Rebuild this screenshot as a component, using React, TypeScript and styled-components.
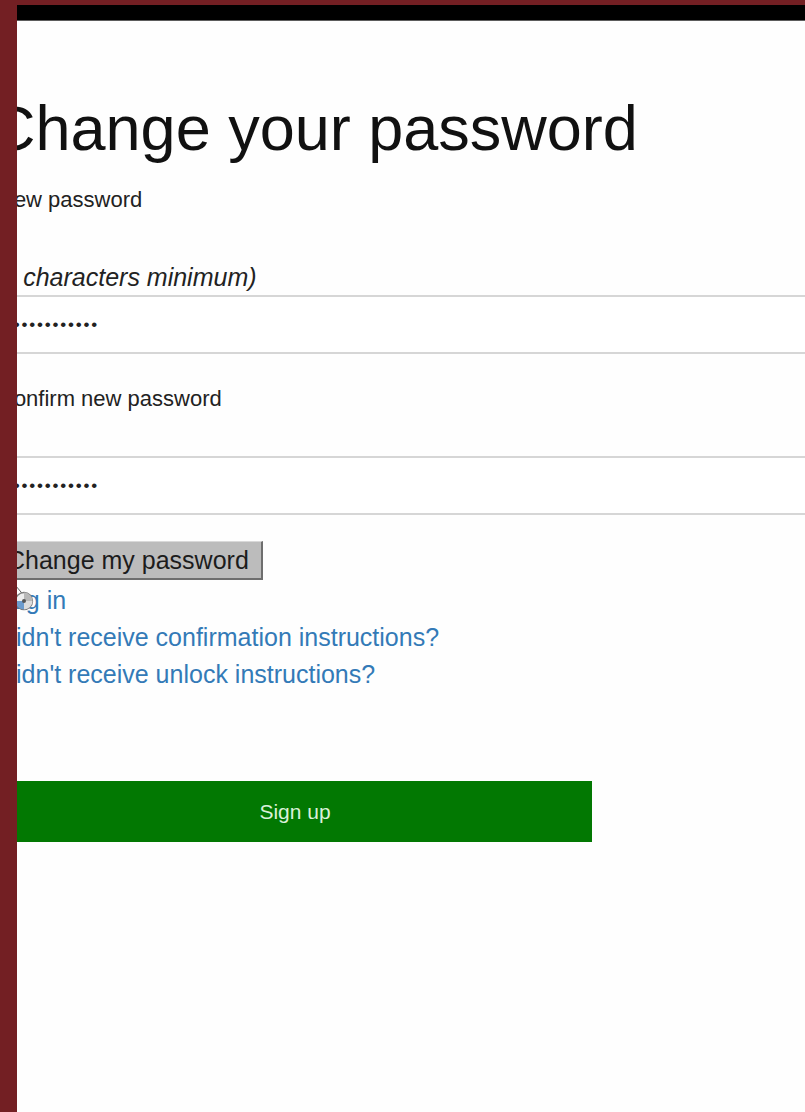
import * as React from 'react';
import styled, { createGlobalStyle } from 'styled-components';

const GlobalStyle = createGlobalStyle`
  html, body {
    margin: 0;
    padding: 0;
    background: #731f23;
  }

  body {
    font-family: 'Liberation Sans', Helvetica, Arial, sans-serif;
    font-size: 25px;
    color: #1a1a1a;
  }
`;

const Frame = styled.div`
  box-sizing: border-box;
  min-height: 100vh;
  padding: 5px 0 0 17px;
  display: flex;
`;

const Screen = styled.div`
  flex: 1;
  display: flex;
  flex-direction: column;
  background: #fefefe;
  overflow: hidden;
`;

const TopBar = styled.div`
  height: 15px;
  flex-shrink: 0;
  background: #000000;
  border-bottom: 1px solid #5c5c5c;
`;

const Content = styled.form`
  display: flex;
  flex-direction: column;
  align-items: flex-start;
  margin-left: -19px;
`;

const Title = styled.h2`
  margin: 73px 0 0 -8px;
  font-size: 63px;
  line-height: 69px;
  font-weight: normal;
  color: #111111;
  white-space: nowrap;
`;

const Label = styled.label<{ $gap: number }>`
  display: block;
  margin-top: ${(p) => p.$gap}px;
  font-size: 22px;
  line-height: 30px;
  color: #222222;
  white-space: nowrap;
`;

const Hint = styled.em`
  display: block;
  margin: 47px 0 0 -4px;
  font-size: 25px;
  line-height: 30px;
  color: #222222;
  white-space: nowrap;
`;

const Field = styled.input<{ $gap: number }>`
  box-sizing: border-box;
  width: calc(100% + 60px);
  height: 59px;
  margin: ${(p) => p.$gap}px 0 0;
  padding: 0 0 0 8px;
  border: none;
  border-top: 2px solid #d6d6d6;
  border-bottom: 2px solid #d6d6d6;
  background: #ffffff;
  font-family: inherit;
  font-size: 17px;
  letter-spacing: 1.8px;
  color: #222222;
  outline: none;
`;

const SubmitButton = styled.button`
  box-sizing: border-box;
  height: 39px;
  margin: 26px 0 0 -5px;
  padding: 0 12px 0 13px;
  background: #bcbcbc;
  border-top: 1px solid #d9d9d9;
  border-left: 1px solid #d9d9d9;
  border-right: 2px solid #6e6e6e;
  border-bottom: 2px solid #6e6e6e;
  border-radius: 0;
  font-family: inherit;
  font-size: 25px;
  color: #1c1c1c;
  white-space: nowrap;
`;

const LinkList = styled.div`
  position: relative;
  margin-top: 2px;
  display: flex;
  flex-direction: column;
`;

const Link = styled.a`
  font-size: 25px;
  line-height: 37px;
  color: #337ab7;
  text-decoration: none;
  white-space: nowrap;
`;

const BusyCursor = styled.svg`
  position: absolute;
  left: 14px;
  top: 3px;
  width: 22px;
  height: 28px;
  pointer-events: none;
`;

const SignUp = styled.a`
  display: flex;
  align-items: center;
  justify-content: center;
  width: 594px;
  height: 61px;
  margin-top: 88px;
  background: #027802;
  color: #d9f0d9;
  font-size: 21px;
  text-decoration: none;
`;

const App: React.FC = () => {
  return (
    <>
      <GlobalStyle />
      <Frame>
        <Screen>
          <TopBar />
          <Content onSubmit={(e) => e.preventDefault()}>
            <Title>Change your password</Title>
            <Label $gap={22} htmlFor="user_password">
              New password
            </Label>
            <Hint>(8 characters minimum)</Hint>
            <Field
              $gap={3}
              id="user_password"
              type="password"
              defaultValue="password1234"
              readOnly
            />
            <Label $gap={30} htmlFor="user_password_confirmation">
              Confirm new password
            </Label>
            <Field
              $gap={42}
              id="user_password_confirmation"
              type="password"
              defaultValue="password1234"
              readOnly
            />
            <SubmitButton type="submit">Change my password</SubmitButton>
            <LinkList>
              <Link href="#">Log in</Link>
              <Link href="#">Didn't receive confirmation instructions?</Link>
              <Link href="#">Didn't receive unlock instructions?</Link>
              {/* spinning wait cursor resting over the first link */}
              <BusyCursor viewBox="0 0 22 28">
                <path d="M3 0 L3 14 L6.5 11 L9 16 L10.5 15.3 L8.2 10.5 L12 10.5 Z" fill="#ffffff" stroke="#4a4a4a" strokeWidth="0.9" />
                <circle cx="12" cy="16" r="8.5" fill="#eeeeee" stroke="#7c7c7c" strokeWidth="1.4" />
                <path d="M12 16 L12 7.5 A8.5 8.5 0 0 1 20.5 16 Z" fill="#b8b8b8" />
                <path d="M12 16 L20.5 16 A8.5 8.5 0 0 1 12 24.5 Z" fill="#dcdcdc" />
                <path d="M12 16 L12 24.5 A8.5 8.5 0 0 1 3.5 16 Z" fill="#6d9cce" />
                <circle cx="12" cy="16" r="2" fill="#555555" />
              </BusyCursor>
            </LinkList>
            <SignUp href="#">Sign up</SignUp>
          </Content>
        </Screen>
      </Frame>
    </>
  );
};

export default App;
